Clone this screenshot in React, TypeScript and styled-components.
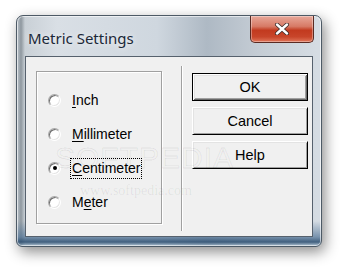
import React from "react";
import styled, { createGlobalStyle } from "styled-components";

const Global = createGlobalStyle`
  html, body { margin: 0; padding: 0; background: #ffffff; }
  body { width: 350px; height: 275px; overflow: hidden; }
`;

const Stage = styled.div`
  width: 350px;
  height: 275px;
  padding: 15px 0 0 16px;
  box-sizing: border-box;
`;

const Window = styled.div`
  position: relative;
  width: 306px;
  height: 232px;
  box-sizing: border-box;
  border: 1px solid #4d5a66;
  border-radius: 7px 7px 6px 6px;
  padding: 0 8px 9px 8px;
  display: flex;
  flex-direction: column;
  background:
    linear-gradient(to bottom, rgba(255,255,255,0) 0, rgba(255,255,255,0) 205px, rgba(80,115,150,0.7) 221px, rgba(40,75,110,0.85) 226px, rgba(120,150,175,0.6) 229px),
    linear-gradient(to right, #b9c2cb 0, #8f989f 4px, #c9d0d6 8px, #d9dfe5 40px, #cfd7df 140px, #aeb9c4 190px, #c4ccd4 240px, #d5dce3 300px);
  box-shadow: 0 0 0 1px rgba(255,255,255,0.6) inset, 3px 5px 14px rgba(0,0,0,0.45);
`;

const TitleBar = styled.div`
  height: 40px;
  display: flex;
  align-items: flex-start;
`;

const Title = styled.div`
  margin: 12px 0 0 3px;
  font-family: "Noto Sans", "Open Sans", sans-serif;
  font-size: 15px;
  line-height: 20px;
  color: #1b2838;
  text-shadow: 0 0 6px rgba(255,255,255,0.9);
`;

const CloseButton = styled.div`
  margin-left: auto;
  margin-right: -1px;
  width: 64px;
  height: 27px;
  box-sizing: border-box;
  border: 1px solid #5a2a22;
  border-top: none;
  border-radius: 0 0 5px 5px;
  background: linear-gradient(to bottom, #e8a89a 0, #d77a66 40%, #c23a1f 55%, #c8452a 80%, #e0765a 100%);
  box-shadow: inset 0 0 0 1px rgba(255,255,255,0.35);
  display: flex;
  align-items: center;
  justify-content: center;
`;

const Client = styled.div`
  flex: 1;
  border: 1px solid #56616d;
  background: #f0f0f0;
  display: flex;
  align-items: flex-start;
  font-family: "Liberation Sans", Arial, sans-serif;
  font-size: 14px;
  color: #000;
`;

const GroupBox = styled.div`
  margin: 14px 0 0 10px;
  width: 126px;
  height: 153px;
  box-sizing: border-box;
  border: 1px solid #a0a0a0;
  box-shadow: inset 1px 1px 0 #ffffff, 1px 1px 0 #ffffff;
  padding: 11px 0 0 11px;
  display: flex;
  flex-direction: column;
`;

const RadioRow = styled.div`
  height: 34px;
  display: flex;
  align-items: center;
`;

const RadioCircle = styled.span<{ $checked?: boolean }>`
  width: 13px;
  height: 13px;
  box-sizing: border-box;
  border-radius: 50%;
  border: 1px solid;
  border-color: #a8a8a8 #ffffff #ffffff #a8a8a8;
  background: #ffffff;
  box-shadow: inset 1px 1px 0 #6e6e6e, inset -1px -1px 0 #e6e6e6;
  display: flex;
  align-items: center;
  justify-content: center;
  &::after {
    content: "";
    display: ${(p) => (p.$checked ? "block" : "none")};
    width: 4px;
    height: 4px;
    border-radius: 50%;
    background: #000;
  }
`;

const RadioLabel = styled.span<{ $focused?: boolean }>`
  margin-left: 9px;
  padding: 2px 1px 2px 1px;
  border: 1px dotted ${(p) => (p.$focused ? "#000" : "transparent")};
  line-height: 15px;
  u { text-decoration: underline; text-underline-offset: 2px; }
`;

const Separator = styled.div`
  margin: 9px 0 0 19px;
  width: 1px;
  height: 165px;
  background: #a0a0a0;
  border-right: 1px solid #ffffff;
`;

const ButtonColumn = styled.div`
  margin: 16px 0 0 9px;
  width: 116px;
  display: flex;
  flex-direction: column;
  gap: 6px;
`;

const Button = styled.div<{ $default?: boolean }>`
  height: 28px;
  box-sizing: border-box;
  display: flex;
  align-items: center;
  justify-content: center;
  background: #f0f0f0;
  font-size: 14.5px;
  border: 1px solid;
  border-color: ${(p) => (p.$default ? "#000" : "#fff #000 #000 #fff")};
  box-shadow: ${(p) =>
    p.$default
      ? "inset 1px 1px 0 #fff, inset -1px -1px 0 #696969, inset 2px 2px 0 #e3e3e3, inset -2px -2px 0 #a0a0a0"
      : "inset 1px 1px 0 #e3e3e3, inset -1px -1px 0 #a0a0a0"};
`;

const Watermark = styled.div`
  position: absolute;
  left: 38px;
  top: 127px;
  pointer-events: none;
  font-family: "Liberation Sans", sans-serif;
  color: transparent;
  -webkit-text-stroke: 1px rgba(0, 0, 0, 0.07);
  font-size: 30px;
  letter-spacing: 1px;
  line-height: 30px;
  sup { font-size: 8px; vertical-align: top; margin-left: 2px; }
`;

const WatermarkUrl = styled.div`
  position: absolute;
  left: 63px;
  top: 167px;
  pointer-events: none;
  font-family: "Liberation Serif", serif;
  font-size: 14px;
  color: rgba(0, 0, 0, 0.07);
`;

const radios = [
  { label: <><u>I</u>nch</>, checked: false },
  { label: <><u>M</u>illimeter</>, checked: false },
  { label: <><u>C</u>entimeter</>, checked: true },
  { label: <>M<u>e</u>ter</>, checked: false },
];

export default function App() {
  return (
    <>
      <Global />
      <Stage>
        <Window>
          <TitleBar>
            <Title>Metric Settings</Title>
            <CloseButton>
              <svg width="16" height="12" viewBox="0 0 16 12">
                <path
                  d="M3 1.5 L13 10.5 M13 1.5 L3 10.5"
                  stroke="#3a2a28"
                  strokeWidth="4"
                  strokeLinecap="round"
                />
                <path
                  d="M3 1.5 L13 10.5 M13 1.5 L3 10.5"
                  stroke="#ffffff"
                  strokeWidth="2.4"
                  strokeLinecap="round"
                />
              </svg>
            </CloseButton>
          </TitleBar>
          <Client>
            <GroupBox>
              {radios.map((r, i) => (
                <RadioRow key={i}>
                  <RadioCircle $checked={r.checked} />
                  <RadioLabel $focused={r.checked}>{r.label}</RadioLabel>
                </RadioRow>
              ))}
            </GroupBox>
            <Separator />
            <ButtonColumn>
              <Button $default>OK</Button>
              <Button>Cancel</Button>
              <Button>Help</Button>
            </ButtonColumn>
          </Client>
          <Watermark>SOFTPEDIA<sup>™</sup></Watermark>
          <WatermarkUrl>www.softpedia.com</WatermarkUrl>
        </Window>
      </Stage>
    </>
  );
}
